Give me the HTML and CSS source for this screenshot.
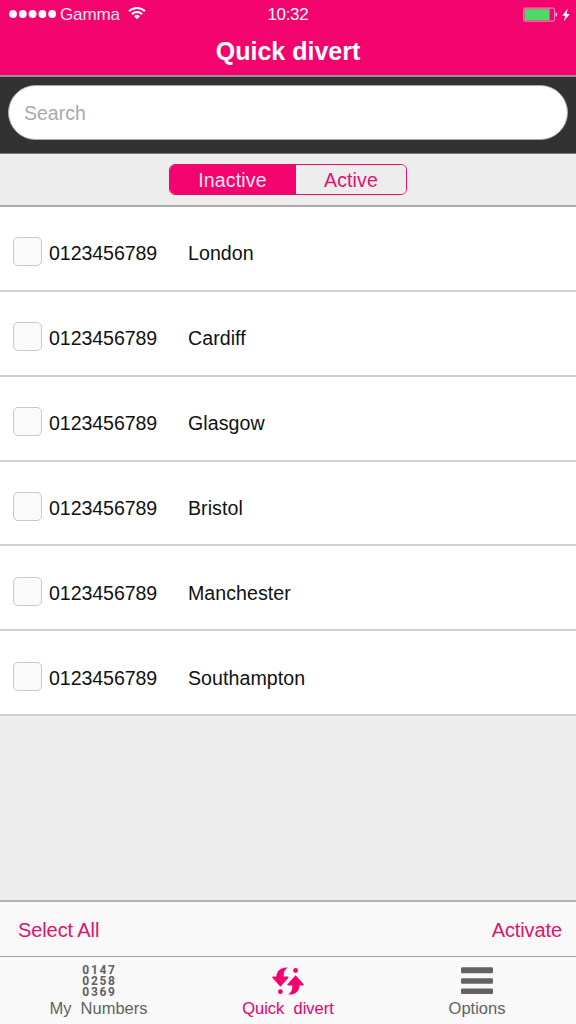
FILE: index.html
```html
<!DOCTYPE html>
<html lang="en">
<head>
<meta charset="utf-8">
<title>Quick divert</title>
<link rel="stylesheet" href="styles.css">
</head>
<body>
<div class="app">
  <header class="header">
    <div class="status">
      <div class="carrier">
        <svg class="signal" viewBox="0 0 48 10"><circle cx="4" cy="5" r="3.9"/><circle cx="13.8" cy="5" r="3.9"/><circle cx="23.6" cy="5" r="3.9"/><circle cx="33.4" cy="5" r="3.9"/><circle cx="43.2" cy="5" r="3.9"/></svg>
        <span class="carrier-name">Gamma</span>
        <svg class="wifi" viewBox="0 0 18 14"><path d="M1 5.2a11.4 11.4 0 0 1 16 0M3.9 8.2a7.3 7.3 0 0 1 10.2 0" fill="none" stroke="#fff" stroke-width="2"/><path d="M6 10.2a4.3 4.3 0 0 1 6 0l-3 3.1z"/></svg>
      </div>
      <span class="time">10:32</span>
      <div class="power">
        <svg class="battery" viewBox="0 0 36 16"><rect x=".7" y="1.2" width="30.8" height="13" rx="1.6" fill="none" stroke="#ff7aba" stroke-width="1.2"/><rect x="1.6" y="2.1" width="25" height="11.2" fill="#50d968"/><path d="M32.5 5.2q1.8.5 1.8 2.4t-1.8 2.4z" fill="#ffb5d9"/></svg>
        <svg class="bolt" viewBox="0 0 8 14"><path d="M5.8.5L.3 7.7h3L1.8 13.4 7.7 6H4.6z"/></svg>
      </div>
    </div>
    <h1 class="title">Quick divert</h1>
  </header>
  <div class="search-bar"><input class="search" type="text" placeholder="Search" aria-label="Search"></div>
  <div class="filter">
    <div class="segments"><button class="segment selected">Inactive</button><button class="segment">Active</button></div>
  </div>
  <main class="content">
    <ul class="list">
      <li class="row"><span class="check"></span><span class="number">0123456789</span><span class="city">London</span></li>
      <li class="row"><span class="check"></span><span class="number">0123456789</span><span class="city">Cardiff</span></li>
      <li class="row"><span class="check"></span><span class="number">0123456789</span><span class="city">Glasgow</span></li>
      <li class="row"><span class="check"></span><span class="number">0123456789</span><span class="city">Bristol</span></li>
      <li class="row"><span class="check"></span><span class="number">0123456789</span><span class="city">Manchester</span></li>
      <li class="row"><span class="check"></span><span class="number">0123456789</span><span class="city">Southampton</span></li>
    </ul>
  </main>
  <div class="toolbar"><button class="action">Select All</button><button class="action activate">Activate</button></div>
  <nav class="tabs">
    <a class="tab"><span class="digits"><span>0147</span><span>0258</span><span>0369</span></span><span class="label">My&nbsp; Numbers</span></a>
    <a class="tab current"><svg class="icon divert" viewBox="0 0 32 28"><path d="M15.8.5C9 0 4.6 3.8 4.4 9.6H1.2Q-.5 9.8.6 11.1l7.8 8.7 7.9-8.7q1-1.3-.7-1.5H11.800C11.200 5.800 12.600 2.700 15.800.5z"/><circle cx="8.4" cy="24.7" r="2.4"/><path d="M16.200 27.500c6.800.5 11.200-3.300 11.400-9.100h3.200q1.700-.2.6-1.500L23.6 8.200l-7.9 8.700q-1 1.300.7 1.500h3.800c.6 3.800-.8 6.900-4 9.100z"/><circle cx="23.6" cy="3.5" r="2.4"/></svg><span class="label">Quick&nbsp; divert</span></a>
    <a class="tab"><svg class="icon menu" viewBox="0 0 32 28"><rect width="32" height="6" y=".3" rx="1.2"/><rect width="32" height="5.5" y="11.2" rx="1.2"/><rect width="32" height="5.5" y="21.5" rx="1.2"/></svg><span class="label">Options</span></a>
  </nav>
</div>
</body>
</html>
```
FILE: styles.css
```css
* { box-sizing: border-box; }
body { margin: 0; font-family: "Liberation Sans", Arial, sans-serif; }
button { font: inherit; border: 0; background: none; padding: 0; color: #e1126f; }
.app { width: 576px; height: 1024px; display: flex; flex-direction: column; background: #ededed; overflow: hidden; }
.header { height: 77px; flex: none; background: #f3036e; border-bottom: 2px solid #a18b94; color: #fff; }
.status { height: 29px; display: grid; grid-template-columns: 1fr auto 1fr; align-items: center; padding: 0 6px 0 9px; }
.status svg { fill: #fff; flex: none; }
.carrier { display: flex; align-items: center; }
.signal { width: 48px; height: 10px; margin-top: -1px; }
.carrier-name { font-size: 17px; margin-left: 3px; line-height: 28px; margin-top: 1px; letter-spacing: -.15px; color: #ffe3f1; }
.wifi { width: 18px; height: 14px; margin: -3px 0 0 8px; }
.time { width: 46px; font-size: 17px; line-height: 28px; letter-spacing: -.35px; padding-left: 1px; }
.power { display: flex; justify-content: flex-end; align-items: center; }
.battery { width: 36px; height: 16px; }
.bolt { width: 8px; height: 14px; margin-left: 3px; }
.title { margin: 7px 0 0; font-size: 25px; line-height: 30px; text-align: center; }
.search-bar { height: 77px; flex: none; background: #323232; border-bottom: 1px solid #777; padding: 8px 8px 0; }
.search { display: block; width: 560px; height: 55px; border: 1px solid #aaa; border-radius: 28px; padding: 1px 15px 0; font: 19.5px "Liberation Sans", Arial, sans-serif; background: #fff; outline: 0; }
.search::placeholder { color: #aaa; opacity: 1; }
.filter { height: 53px; flex: none; border-bottom: 2px solid #ababab; padding: 10px 169px 0; }
.segments { display: flex; width: 238px; height: 31px; border: 1.5px solid #e1126f; border-radius: 6px; overflow: hidden; }
.segment { width: 110px; flex: none; font-size: 19.5px; line-height: 29px; padding-top: 1px; letter-spacing: .15px; }
.segment:not(.selected) { background: #ededed; }
.selected { width: 126px; background: #f3036e; color: #ffe6f2; padding-right: 1px; }
.content { flex: 1; min-height: 0; }
.list { margin: 0; padding: 0; list-style: none; }
.row { height: 84.85px; display: flex; align-items: center; padding: 10px 13px 0; background: #fff; border-bottom: 2px solid #d0d0d0; font-size: 19.6px; color: #111; }
.check { width: 29px; height: 29px; flex: none; border: 1.5px solid #c9c9cd; border-radius: 5px; background: #fafafa; margin-top: -3px; }
.number { width: 139px; margin-left: 7px; letter-spacing: -.08px; }
.city { letter-spacing: .05px; }
.number, .city { padding-top: 1px; }
.toolbar { height: 56px; flex: none; display: flex; justify-content: space-between; align-items: center; padding: 0 14px 0 18px; background: #f9f9f9; border-top: 2px solid #b2b2b2; font-size: 20px; }
.action { letter-spacing: -.1px; padding-top: 3px; }
.tabs { height: 68px; flex: none; display: grid; grid-template-columns: 197px 182px 197px; background: #f9f9f9; border-top: 1.5px solid #a0a0a0; color: #626262; }
.tab { display: flex; flex-direction: column; align-items: center; padding-top: 9px; }
.tab:last-child { padding-right: 1px; }
.current { color: #e5006f; }
.icon { height: 28px; width: 32px; display: block; flex: none; margin-top: 1px; fill: currentColor; }
.divert { fill: #f3036e; }
.digits { display: flex; flex-direction: column; height: 33px; margin: -1px 0 -3px 2px; font: bold 12px/11px Roboto, sans-serif; letter-spacing: 1.7px; }
.label { font-size: 16.5px; line-height: 20px; margin-top: 3px; white-space: nowrap; }
```
